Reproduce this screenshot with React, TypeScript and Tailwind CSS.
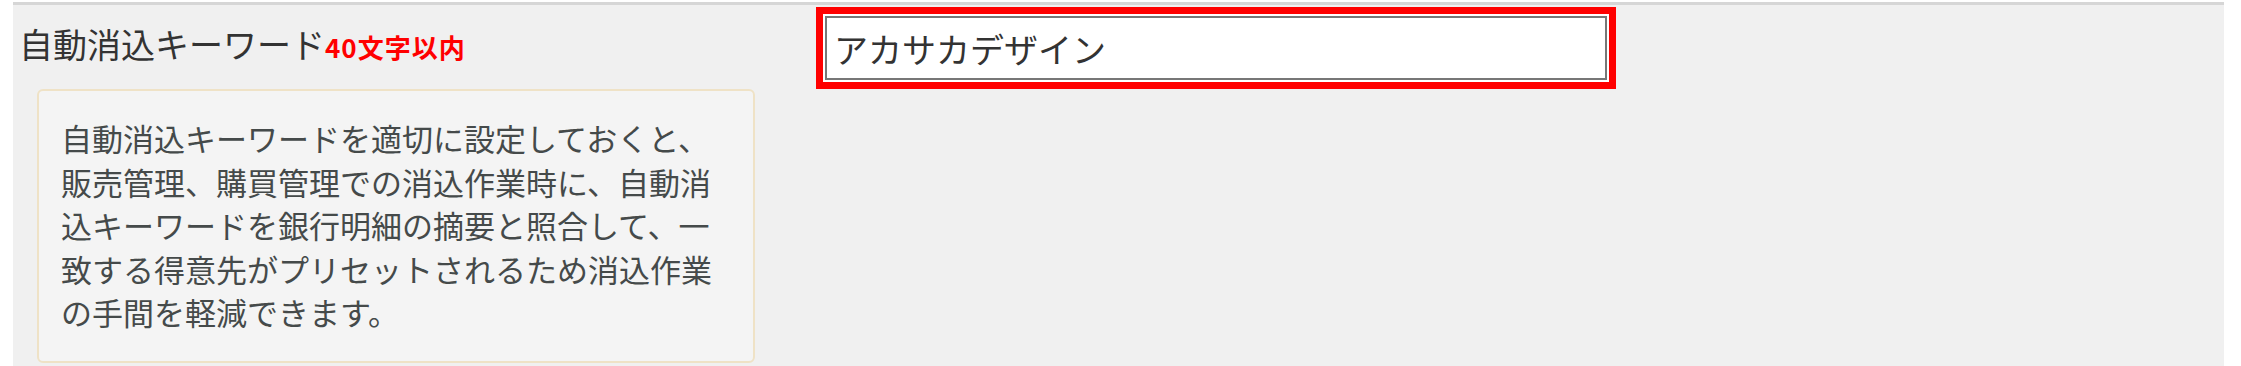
import { useState } from 'react';

const HELP_TEXT =
  '自動消込キーワードを適切に設定しておくと、販売管理、購買管理での消込作業時に、自動消込キーワードを銀行明細の摘要と照合して、一致する得意先がプリセットされるため消込作業の手間を軽減できます。';

export default function App() {
  const [keyword, setKeyword] = useState('アカサカデザイン');

  return (
    <div className="flex h-[366px] w-full bg-white font-['Noto_Sans_CJK_JP','Noto_Sans',sans-serif]">
      <div className="ml-[13px] mr-[17px] mt-[2px] flex flex-1 border-t-[3px] border-[#d6d6d6] bg-[#f0f0f0]">
        {/* left column: label + help */}
        <div className="flex w-[803px] shrink-0 flex-col">
          <div className="mt-[19px] flex items-baseline pl-[6px] leading-[40px]">
            <span className="text-[34px] text-[#333]">自動消込キーワード</span>
            <span className="text-[26px] font-bold tracking-[1px] text-[#ff0000]">40文字以内</span>
          </div>
          <div className="ml-[24px] mt-[22px] h-[274px] w-[718px] rounded-[6px] border-2 border-[#efe2c6] bg-[#f4f4f4] px-[22px] pt-[25px]">
            <p className="text-[31px] leading-[43.5px] text-[#454a4a]">{HELP_TEXT}</p>
          </div>
        </div>

        {/* right column: input */}
        <div className="mt-[2px]">
          <div className="w-[800px] border-[7px] border-[#ff0000] bg-white p-[2px]">
            <input
              value={keyword}
              onChange={e => setKeyword(e.target.value)}
              className="block h-[64px] w-full border-2 border-[#777] bg-white px-[7px] text-[34px] text-[#333] outline-none"
            />
          </div>
        </div>
      </div>
    </div>
  );
}
